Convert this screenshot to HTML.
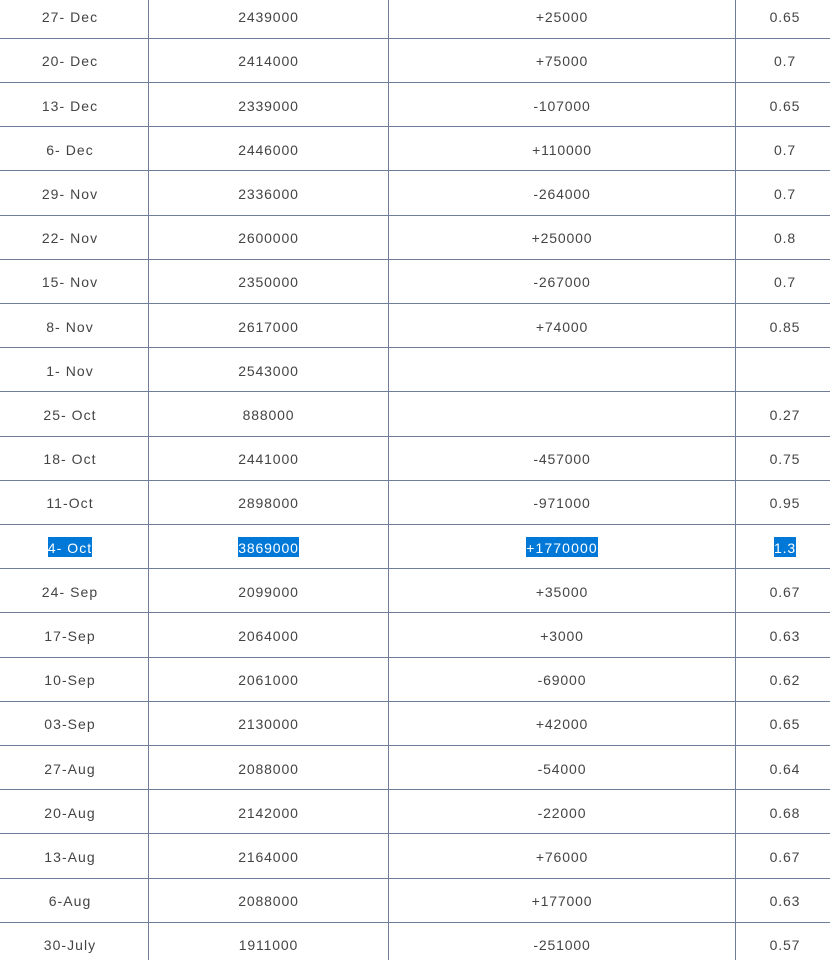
<!DOCTYPE html>
<html>
<head>
<meta charset="utf-8">
<style>
html,body{margin:0;padding:0;background:#fff}
body{position:relative;width:830px;height:960px;overflow:hidden;font-family:"Liberation Sans",sans-serif;font-size:14px;letter-spacing:.85px;color:#444}
.h,.v{position:absolute;background:#6f7d99}
.h{left:0;width:830px;height:1px}
.v{top:0;width:1px;height:960px}
.r{position:absolute;left:0;width:830px;height:20px;line-height:20px}
.r b{position:absolute;top:0;font-weight:normal;text-align:center}
.a{left:-8px;width:156px;letter-spacing:1.05px}
.c{left:149px;width:239px}
.d{left:389px;width:346px}
.e{left:736px;width:98px}
.s{color:#fff}
.s i{font-style:normal;background:#0078d7;display:inline-block;height:20px;line-height:22px;vertical-align:top}
.s .d i{letter-spacing:1.1px}
</style>
</head>
<body>
<div class="v" style="left:148px"></div>
<div class="v" style="left:388px"></div>
<div class="v" style="left:735px"></div>
<div class="h" style="top:38px"></div>
<div class="h" style="top:82px"></div>
<div class="h" style="top:126px"></div>
<div class="h" style="top:170px"></div>
<div class="h" style="top:215px"></div>
<div class="h" style="top:259px"></div>
<div class="h" style="top:303px"></div>
<div class="h" style="top:347px"></div>
<div class="h" style="top:391px"></div>
<div class="h" style="top:436px"></div>
<div class="h" style="top:480px"></div>
<div class="h" style="top:524px"></div>
<div class="h" style="top:568px"></div>
<div class="h" style="top:612px"></div>
<div class="h" style="top:657px"></div>
<div class="h" style="top:701px"></div>
<div class="h" style="top:745px"></div>
<div class="h" style="top:789px"></div>
<div class="h" style="top:833px"></div>
<div class="h" style="top:878px"></div>
<div class="h" style="top:922px"></div>

<div class="r" style="top:7px"><b class="a">27- Dec</b><b class="c">2439000</b><b class="d">+25000</b><b class="e">0.65</b></div>
<div class="r" style="top:51px"><b class="a">20- Dec</b><b class="c">2414000</b><b class="d">+75000</b><b class="e">0.7</b></div>
<div class="r" style="top:96px"><b class="a">13- Dec</b><b class="c">2339000</b><b class="d">-107000</b><b class="e">0.65</b></div>
<div class="r" style="top:140px"><b class="a">6- Dec</b><b class="c">2446000</b><b class="d">+110000</b><b class="e">0.7</b></div>
<div class="r" style="top:184px"><b class="a">29- Nov</b><b class="c">2336000</b><b class="d">-264000</b><b class="e">0.7</b></div>
<div class="r" style="top:228px"><b class="a">22- Nov</b><b class="c">2600000</b><b class="d">+250000</b><b class="e">0.8</b></div>
<div class="r" style="top:272px"><b class="a">15- Nov</b><b class="c">2350000</b><b class="d">-267000</b><b class="e">0.7</b></div>
<div class="r" style="top:317px"><b class="a">8- Nov</b><b class="c">2617000</b><b class="d">+74000</b><b class="e">0.85</b></div>
<div class="r" style="top:361px"><b class="a">1- Nov</b><b class="c">2543000</b></div>
<div class="r" style="top:405px"><b class="a">25- Oct</b><b class="c">888000</b><b class="e">0.27</b></div>
<div class="r" style="top:449px"><b class="a">18- Oct</b><b class="c">2441000</b><b class="d">-457000</b><b class="e">0.75</b></div>
<div class="r" style="top:493px"><b class="a">11-Oct</b><b class="c">2898000</b><b class="d">-971000</b><b class="e">0.95</b></div>
<div class="r s" style="top:537px"><b class="a"><i>4- Oct</i></b><b class="c"><i>3869000</i></b><b class="d"><i>+1770000</i></b><b class="e"><i>1.3</i></b></div>
<div class="r" style="top:582px"><b class="a">24- Sep</b><b class="c">2099000</b><b class="d">+35000</b><b class="e">0.67</b></div>
<div class="r" style="top:626px"><b class="a">17-Sep</b><b class="c">2064000</b><b class="d">+3000</b><b class="e">0.63</b></div>
<div class="r" style="top:670px"><b class="a">10-Sep</b><b class="c">2061000</b><b class="d">-69000</b><b class="e">0.62</b></div>
<div class="r" style="top:714px"><b class="a">03-Sep</b><b class="c">2130000</b><b class="d">+42000</b><b class="e">0.65</b></div>
<div class="r" style="top:759px"><b class="a">27-Aug</b><b class="c">2088000</b><b class="d">-54000</b><b class="e">0.64</b></div>
<div class="r" style="top:803px"><b class="a">20-Aug</b><b class="c">2142000</b><b class="d">-22000</b><b class="e">0.68</b></div>
<div class="r" style="top:847px"><b class="a">13-Aug</b><b class="c">2164000</b><b class="d">+76000</b><b class="e">0.67</b></div>
<div class="r" style="top:891px"><b class="a">6-Aug</b><b class="c">2088000</b><b class="d">+177000</b><b class="e">0.63</b></div>
<div class="r" style="top:935px"><b class="a">30-July</b><b class="c">1911000</b><b class="d">-251000</b><b class="e">0.57</b></div>
</body>
</html>
